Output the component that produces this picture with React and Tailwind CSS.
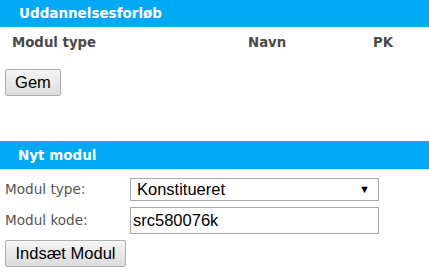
export default function App() {
  const verdana = "font-['DejaVu_Sans',Verdana,sans-serif]";
  const arial = "font-['Liberation_Sans',Arial,sans-serif]";
  const btn = `h-[27px] border border-[#adadad] rounded-[2px] bg-gradient-to-b from-[#f5f5f5] to-[#dcdcdc] text-[16.5px] text-black leading-none ${arial}`;

  return (
    <div className={`w-[429px] h-[277px] bg-white overflow-hidden ${verdana}`}>
      {/* Uddannelsesforløb */}
      <div className="h-[27px] bg-[#03a9f4] pl-[19px] flex items-center text-white font-bold text-[13.5px]">
        Uddannelsesforløb
      </div>
      <div className="flex items-center h-[32px] text-[13.3px] font-bold text-[#4a4a4a]">
        <span className="pl-[12px] w-[248px]">Modul type</span>
        <span className="w-[125px]">Navn</span>
        <span>PK</span>
      </div>
      <div className="pl-[5px] pt-[10px]">
        <button className={`${btn} w-[56px]`}>Gem</button>
      </div>

      {/* Nyt modul */}
      <div className="mt-[45px] h-[28px] bg-[#03a9f4] pl-[18px] flex items-center text-white font-bold text-[13.5px]">
        Nyt modul
      </div>
      <div className="pl-[5px] pt-[9px] flex flex-col gap-[6px] text-[13.6px] text-[#555]">
        <div className="flex items-center">
          <span className="w-[125px]">Modul type:</span>
          <div className={`w-[249px] h-[23px] border border-[#aaa] flex items-center justify-between pl-[6px] pr-[8px] text-[16.5px] text-black ${arial}`}>
            <span>Konstitueret</span>
            <span className="text-[11px]">▼</span>
          </div>
        </div>
        <div className="flex items-center">
          <span className="w-[125px]">Modul kode:</span>
          <div className={`w-[249px] h-[27px] border border-[#aaa] flex items-center pl-[2px] text-[16.5px] text-black ${arial}`}>
            src580076k
          </div>
        </div>
        <div>
          <button className={`${btn} w-[121px]`}>Indsæt Modul</button>
        </div>
      </div>
    </div>
  );
}
